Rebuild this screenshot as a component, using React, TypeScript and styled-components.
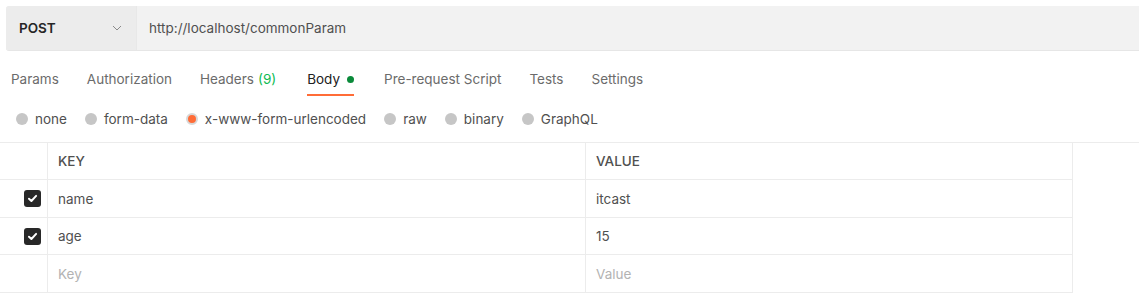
import styled, { createGlobalStyle } from 'styled-components';

const GlobalStyle = createGlobalStyle`
  body {
    margin: 0;
    background: #fff;
    font-family: Inter, "Noto Sans", sans-serif;
    font-size: 13.5px;
    color: #505050;
  }
`;

const tabs = [
  { label: 'Params' },
  { label: 'Authorization' },
  { label: 'Headers', count: '(9)' },
  { label: 'Body', active: true, dot: true },
  { label: 'Pre-request Script' },
  { label: 'Tests' },
  { label: 'Settings' },
];

const bodyTypes = [
  { label: 'none' },
  { label: 'form-data' },
  { label: 'x-www-form-urlencoded', selected: true },
  { label: 'raw' },
  { label: 'binary' },
  { label: 'GraphQL' },
];

const rows = [
  { key: 'name', value: 'itcast', checked: true },
  { key: 'age', value: '15', checked: true },
];

function CheckIcon() {
  return (
    <svg width="11" height="11" viewBox="0 0 10 10" fill="none">
      <path d="M1.8 5.2 L4 7.3 L8.3 2.6" stroke="#fff" strokeWidth="1.8" strokeLinecap="round" strokeLinejoin="round" />
    </svg>
  );
}

export default function App() {
  return (
    <Page>
      <GlobalStyle />
      <UrlBar>
        <MethodBox>
          <Method>POST</Method>
          <svg width="10" height="6" viewBox="0 0 10 6" fill="none">
            <path d="M1 1 L5 5 L9 1" stroke="#8a8a8a" strokeWidth="1" />
          </svg>
        </MethodBox>
        <UrlText>http://localhost/commonParam</UrlText>
      </UrlBar>

      <TabRow>
        {tabs.map(t => (
          <Tab key={t.label} active={!!t.active}>
            {t.label}
            {t.count && <Count>{t.count}</Count>}
            {t.dot && <Dot />}
          </Tab>
        ))}
      </TabRow>

      <RadioRow>
        {bodyTypes.map(b => (
          <RadioItem key={b.label}>
            <Radio selected={!!b.selected} />
            {b.label}
          </RadioItem>
        ))}
      </RadioRow>

      <Table>
        <CheckCell />
        <HeadCell>KEY</HeadCell>
        <HeadCell>VALUE</HeadCell>
        {rows.map(r => (
          <Row key={r.key}>
            <CheckCell>
              <Checkbox>{r.checked && <CheckIcon />}</Checkbox>
            </CheckCell>
            <Cell>{r.key}</Cell>
            <Cell>{r.value}</Cell>
          </Row>
        ))}
        <Row>
          <CheckCell />
          <Cell placeholder>Key</Cell>
          <Cell placeholder>Value</Cell>
        </Row>
      </Table>
    </Page>
  );
}

const Page = styled.div`
  width: 1139px;
  padding-top: 6px;
`;

const UrlBar = styled.div`
  display: flex;
  height: 44px;
  margin-left: 6px;
  background: #f2f2f2;
  border-bottom: 1px solid #e6e6e6;
  border-radius: 3px 0 0 3px;
  overflow: hidden;
`;

const MethodBox = styled.div`
  width: 131px;
  display: flex;
  align-items: center;
  justify-content: space-between;
  padding: 0 14px 0 13px;
  box-sizing: border-box;
  background: #ececec;
  border-right: 1px solid #e8e8e8;
`;

const Method = styled.span`
  font-weight: 600;
  color: #262626;
`;

const UrlText = styled.span`
  display: flex;
  align-items: center;
  padding-left: 12px;
  color: #505050;
`;

const TabRow = styled.div`
  display: flex;
  gap: 28px;
  padding: 0 0 0 11px;
  margin-top: 17px;
  height: 30px;
`;

const Tab = styled.div<{ active: boolean }>`
  display: flex;
  align-items: flex-start;
  gap: 7px;
  height: 28px;
  padding-top: 3px;
  box-sizing: border-box;
  color: ${p => (p.active ? '#212121' : '#6b6b6b')};
  border-bottom: 2px solid ${p => (p.active ? '#ff6c37' : 'transparent')};
  margin: ${p => (p.active ? '0 2px 0 3px' : '0')};
`;

const Count = styled.span`
  color: #0cbb52;
  margin-left: -3px;
`;

const Dot = styled.span`
  width: 7px;
  height: 7px;
  margin-top: 5px;
  border-radius: 50%;
  background: #0a8a3a;
`;

const RadioRow = styled.div`
  display: flex;
  gap: 18px;
  padding-left: 16px;
  margin-top: 6px;
  height: 30px;
  align-items: center;
`;

const RadioItem = styled.label`
  display: flex;
  align-items: center;
  gap: 7px;
  color: #505050;
`;

const Radio = styled.span<{ selected: boolean }>`
  width: 12px;
  height: 12px;
  border-radius: 50%;
  box-sizing: border-box;
  background: ${p => (p.selected ? '#ff6c37' : '#c6c6c6')};
  border: ${p => (p.selected ? '2px solid #d8d8d8' : 'none')};
`;

const Table = styled.div`
  display: grid;
  grid-template-columns: 48px 538px 487px;
  grid-template-rows: 37px 38px 37px 38px;
  margin-top: 8px;
  border-top: 1px solid #ececec;
`;

const Row = styled.div`
  display: contents;
`;

const HeadCell = styled.div`
  display: flex;
  align-items: center;
  padding-left: 10px;
  font-weight: 500;
  color: #505050;
  border-bottom: 1px solid #ececec;
  border-right: 1px solid #ececec;
`;

const Cell = styled.div<{ placeholder?: boolean }>`
  display: flex;
  align-items: center;
  padding-left: 10px;
  color: ${p => (p.placeholder ? '#b3b3b3' : '#505050')};
  border-bottom: 1px solid #ececec;
  border-right: 1px solid #ececec;
`;

const CheckCell = styled.div`
  display: flex;
  align-items: center;
  justify-content: flex-end;
  padding-right: 6px;
  border-bottom: 1px solid #ececec;
  border-right: 1px solid #ececec;
`;

const Checkbox = styled.span`
  width: 17px;
  height: 17px;
  border-radius: 3px;
  background: #282828;
  display: flex;
  align-items: center;
  justify-content: center;
`;
